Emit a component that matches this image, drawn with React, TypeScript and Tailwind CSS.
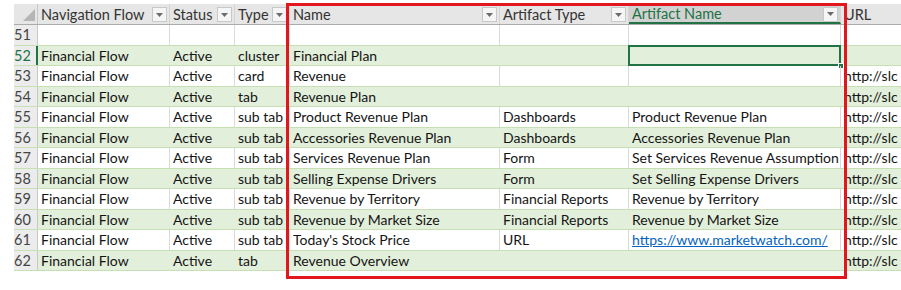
const columns = [
  { label: "Navigation Flow", width: "w-[132px]", filter: true },
  { label: "Status", width: "w-[65px]", filter: true },
  { label: "Type", width: "w-[55px]", filter: true },
  { label: "Name", width: "w-[210px]", filter: true },
  { label: "Artifact Type", width: "w-[129px]", filter: true },
  { label: "Artifact Name", width: "w-[212px]", filter: true, active: true },
  { label: "URL", width: "w-[80px]", filter: false },
];

type Row = { num: number; cells: string[]; link?: boolean };

const rows: Row[] = [
  { num: 51, cells: ["", "", "", "", "", "", ""] },
  { num: 52, cells: ["Financial Flow", "Active", "cluster", "Financial Plan", "", "", ""] },
  { num: 53, cells: ["Financial Flow", "Active", "card", "Revenue", "", "", "http://slc"] },
  { num: 54, cells: ["Financial Flow", "Active", "tab", "Revenue Plan", "", "", "http://slc"] },
  { num: 55, cells: ["Financial Flow", "Active", "sub tab", "Product Revenue Plan", "Dashboards", "Product Revenue Plan", "http://slc"] },
  { num: 56, cells: ["Financial Flow", "Active", "sub tab", "Accessories Revenue Plan", "Dashboards", "Accessories Revenue Plan", "http://slc"] },
  { num: 57, cells: ["Financial Flow", "Active", "sub tab", "Services Revenue Plan", "Form", "Set Services Revenue Assumption", "http://slc"] },
  { num: 58, cells: ["Financial Flow", "Active", "sub tab", "Selling Expense Drivers", "Form", "Set Selling Expense Drivers", "http://slc"] },
  { num: 59, cells: ["Financial Flow", "Active", "sub tab", "Revenue by Territory", "Financial Reports", "Revenue by Territory", "http://slc"] },
  { num: 60, cells: ["Financial Flow", "Active", "sub tab", "Revenue by Market Size", "Financial Reports", "Revenue by Market Size", "http://slc"] },
  { num: 61, cells: ["Financial Flow", "Active", "sub tab", "Today's Stock Price", "URL", "https://www.marketwatch.com/", "http://slc"], link: true },
  { num: 62, cells: ["Financial Flow", "Active", "tab", "Revenue Overview", "", "", "http://slc"] },
];

const FilterButton = () => (
  <div className="ml-auto mr-[2px] w-[15px] h-[15px] shrink-0 border border-[#c8c8c8] bg-[#f5f5f5] flex items-center justify-center">
    <svg width="7" height="4" viewBox="0 0 7 4">
      <path d="M0 0 L7 0 L3.5 4 Z" fill="#6b6b6b" />
    </svg>
  </div>
);

export default function App() {
  return (
    <div className="w-[901px] h-[290px] bg-white relative overflow-hidden font-['Lato',sans-serif] text-[14px]">
      <div className="pt-[4px] pl-[14px]">
        {/* column header row */}
        <div className="flex h-[21px] bg-[#e6e6e6] border-b border-[#ababab]">
          <div className="w-[24px] shrink-0 border-r border-[#c8c8c8] flex items-end justify-end pr-[2px] pb-[3px]">
            <svg width="12" height="12" viewBox="0 0 12 12">
              <path d="M12 0 L12 12 L0 12 Z" fill="#b5b5b5" />
            </svg>
          </div>
          {columns.map((c) => (
            <div
              key={c.label}
              className={`${c.width} shrink-0 flex items-center pl-[3px] border-r border-[#d4d4d4] whitespace-nowrap overflow-hidden text-[14.5px] ${
                c.active ? "bg-[#d2d2d2] text-[#217346] border-b-2 border-b-[#217346] pt-[2px]" : "text-[#333333] pt-[1px]"
              }`}
            >
              <span className="leading-[18px]">{c.label}</span>
              {c.filter && <FilterButton />}
            </div>
          ))}
        </div>

        {/* data rows */}
        {rows.map((r) => {
          const green = r.num % 2 === 0;
          const isActive = r.num === 52;
          return (
            <div
              key={r.num}
              className={`flex h-[20.5px] border-b border-[#c6e0b4] ${green ? "bg-[#e2efda]" : "bg-white"}`}
            >
              <div
                className={`w-[24px] shrink-0 flex items-center pt-[1px] leading-[18px] text-[14.5px] bg-[#ececec] ${
                  isActive ? "text-[#217346] border-r-2 border-[#217346]" : "text-[#444444] border-r border-[#c8c8c8]"
                }`}
              >
                {r.num}
              </div>
              {columns.map((c, i) => {
                const last = i === 5;
                return (
                  <div
                    key={c.label}
                    className={`${c.width} shrink-0 relative flex items-center pl-[3px] pt-[1px] whitespace-nowrap border-r ${
                      green ? "border-[#e2efda]" : "border-[#dadada]"
                    }`}
                  >
                    <span className="block overflow-hidden w-full leading-[18px]">
                      {r.link && last ? (
                        <span className="text-[#0563c1] underline">{r.cells[i]}</span>
                      ) : (
                        <span className="text-[#141414]">{r.cells[i]}</span>
                      )}
                    </span>
                    {isActive && last && (
                      <div className="absolute left-[-1px] top-[-1px] right-[-1px] bottom-[-1px] border-2 border-[#217346]">
                        <div className="absolute right-[-5px] bottom-[-5px] w-[6px] h-[6px] bg-[#217346] border border-white" />
                      </div>
                    )}
                  </div>
                );
              })}
            </div>
          );
        })}
      </div>

      {/* red annotation frame */}
      <div className="absolute left-[286px] top-[3px] w-[561px] h-[276px] border-[3px] border-[#e3151d]" />
    </div>
  );
}
